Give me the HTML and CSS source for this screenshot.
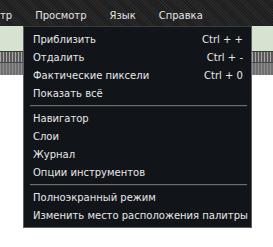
FILE: index.html
```html
<!DOCTYPE html>
<html lang="ru">
<head>
  <meta charset="UTF-8" />
  <title>Просмотр</title>
  <link rel="stylesheet" href="styles.css">
</head>
<body>

  <!-- Menu bar -->
  <nav class="menubar">
    <span class="bar-item">тр</span>
    <span class="bar-item active">Просмотр</span>
    <span class="bar-item">Язык</span>
    <span class="bar-item">Справка</span>
  </nav>

  <!-- Workspace behind the menu -->
  <div class="workspace">
    <div class="panel-head"></div>
    <div class="panel-dots"></div>
    <div class="panel-gray"></div>
  </div>

  <!-- Dropdown -->
  <div class="dropdown">
    <div class="item"><span>Приблизить</span><span class="key">Ctrl + +</span></div>
    <div class="item"><span>Отдалить</span><span class="key">Ctrl + -</span></div>
    <div class="item"><span>Фактические пиксели</span><span class="key">Ctrl + 0</span></div>
    <div class="item"><span>Показать всё</span></div>
    <div class="sep"></div>
    <div class="item"><span>Навигатор</span></div>
    <div class="item"><span>Слои</span></div>
    <div class="item"><span>Журнал</span></div>
    <div class="item"><span>Опции инструментов</span></div>
    <div class="sep"></div>
    <div class="item"><span>Полноэкранный режим</span></div>
    <div class="item"><span>Изменить место расположения палитры</span></div>
  </div>

</body>
</html>
```

FILE: styles.css
```css
* {
  box-sizing: border-box;
}

body {
  margin: 0;
  width: 273px;
  height: 247px;
  overflow: hidden;
  position: relative;
  background: #ffffff;
  font-family: "DejaVu Sans", Verdana, sans-serif;
  font-size: 10px;
}

.menubar {
  height: 26px;
  display: flex;
  align-items: center;
  gap: 23px;
  padding-top: 4px;
  background-color: #1d1d1d;
  background-image:
    repeating-linear-gradient(45deg, rgba(255,255,255,0.06) 0 1px, transparent 1px 2px);
  color: #e4e4e4;
}

.workspace {
  display: flex;
  flex-direction: column;
}

.panel-head {
  height: 26px;
  background: #d7e3d1;
  border-bottom: 1px solid #3a3a3a;
}

.panel-dots {
  height: 11px;
  background-color: #5a5a5a;
  background-image:
    repeating-linear-gradient(90deg, #a8a8a8 0 1px, transparent 1px 3px);
  border-bottom: 1px solid #444;
}

.panel-gray {
  height: 12px;
  background-color: #707070;
  background-image:
    repeating-linear-gradient(90deg, rgba(255,255,255,0.2) 0 1px, transparent 1px 3px);
}

.dropdown {
  position: absolute;
  left: 23px;
  top: 26px;
  width: 229px;
  padding: 3px 0 3px;
  background: #111418;
  border: 1px solid #5c5f62;
  border-top-color: #3a3c3e;
  color: #e8e8e8;
}

.item {
  height: 18px;
  display: flex;
  align-items: center;
  justify-content: space-between;
  padding: 0 8px 0 9px;
  white-space: nowrap;
}

.key {
  font-size: 10px;
}

.sep {
  height: 7px;
  margin: 0 4px 0 6px;
  display: flex;
  flex-direction: column;
  justify-content: center;
}

.sep::before {
  content: "";
  height: 1px;
  background: #6a6c6e;
}

.sep::after {
  content: "";
  height: 1px;
  background: #24272a;
}
```
